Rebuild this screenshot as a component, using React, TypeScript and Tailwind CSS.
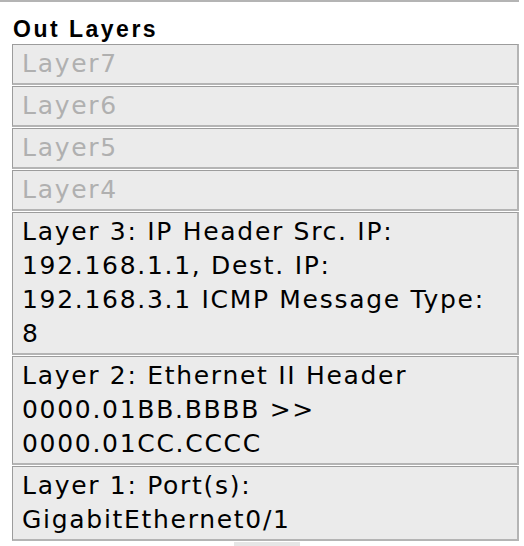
const layers: { text: string; dim?: boolean }[] = [
  { text: "Layer7", dim: true },
  { text: "Layer6", dim: true },
  { text: "Layer5", dim: true },
  { text: "Layer4", dim: true },
  { text: "Layer 3: IP Header Src. IP: 192.168.1.1, Dest. IP: 192.168.3.1 ICMP Message Type: 8" },
  { text: "Layer 2: Ethernet II Header 0000.01BB.BBBB >> 0000.01CC.CCCC" },
  { text: "Layer 1: Port(s): GigabitEthernet0/1" },
];

export default function App() {
  return (
    <div className="h-[546px] w-[524px] overflow-hidden bg-white">
      {/* tail of the box above */}
      <div className="h-[2px] w-[519px] border-b-2 border-r-2 border-[#b4b4b4]" />

      <h2
        className="ml-[13px] mt-[13px] text-[23px] font-bold leading-[28px] tracking-[2.5px] text-black"
        style={{ fontFamily: '"Liberation Sans", Arial, sans-serif' }}
      >
        Out Layers
      </h2>

      <div
        className="ml-[12px] mt-[1px] flex w-[507px] flex-col gap-[1px]"
        style={{ fontFamily: '"DejaVu Sans", Verdana, sans-serif' }}
      >
        {layers.map((l) => (
          <div
            key={l.text}
            className={`border-l border-t border-[#9c9c9c] border-r-2 border-b-2 border-r-[#b4b4b4] border-b-[#b4b4b4] bg-[#ebebeb] pb-[2px] pl-[9px] pr-[12px] pt-[2px] text-[25px] leading-[34px] tracking-[1.7px] ${
              l.dim ? "text-[#b0b0b0]" : "text-black"
            }`}
          >
            {l.text}
          </div>
        ))}
      </div>

      <div className="ml-[234px] mt-[1px] h-[6px] w-[66px] bg-[#e6e6e6]" />
    </div>
  );
}
